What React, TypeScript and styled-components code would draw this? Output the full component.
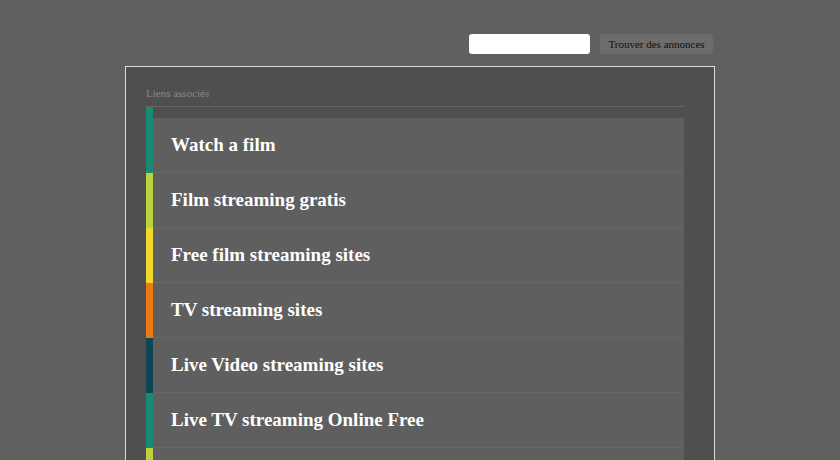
import React from 'react'
import styled, {createGlobalStyle} from 'styled-components'

const Global = createGlobalStyle`
  html, body { margin: 0; background: #606060; }
  body { font-family: "Liberation Serif", serif; }
`

const links = [
  {label: 'Watch a film', color: '#1a8a72'},
  {label: 'Film streaming gratis', color: '#bcd23c'},
  {label: 'Free film streaming sites', color: '#f2da2c'},
  {label: 'TV streaming sites', color: '#ee7a12'},
  {label: 'Live Video streaming sites', color: '#0e4656'},
  {label: 'Live TV streaming Online Free', color: '#1a8a72'},
  {label: 'Online streaming', color: '#bcd23c'}
]

export default function App() {
  return (
    <Page>
      <Global />
      <SearchBar>
        <SearchInput />
        <SearchButton>Trouver des annonces</SearchButton>
      </SearchBar>
      <Box>
        <Label>Liens associés</Label>
        <List>
          {links.map((l, i) => (
            <Item key={l.label} $color={l.color} $first={i === 0}>
              <Row>{l.label}</Row>
            </Item>
          ))}
        </List>
      </Box>
    </Page>
  )
}

const Page = styled.div`
  width: 840px;
  height: 460px;
  overflow: hidden;
  padding-top: 34px;
  box-sizing: border-box;
`

const SearchBar = styled.div`
  width: 590px;
  margin-left: 125px;
  display: flex;
  justify-content: flex-end;
  gap: 10px;
  padding-right: 2px;
  box-sizing: border-box;
`

const SearchInput = styled.div`
  width: 121px;
  height: 20px;
  background: #fff;
  border-radius: 3px;
`

const SearchButton = styled.div`
  width: 113px;
  height: 20px;
  background: #6c6c6c;
  border-radius: 3px;
  color: #111;
  font-size: 11px;
  line-height: 20px;
  text-align: center;
`

const Box = styled.div`
  margin: 12px 0 0 125px;
  width: 590px;
  height: 420px;
  box-sizing: border-box;
  border: 1px solid #dcdcdc;
  background: #4f4f4f;
  padding: 20px 30px 0 20px;
`

const Label = styled.div`
  color: #888;
  font-size: 11px;
  padding-bottom: 7px;
  border-bottom: 1px solid #646464;
`

const List = styled.div`
  display: flex;
  flex-direction: column;
`

const Item = styled.div<{$color: string; $first: boolean}>`
  border-left: 7px solid ${(p) => p.$color};
  padding-top: ${(p) => (p.$first ? '11px' : '0')};
`

const Row = styled.div`
  height: 54px;
  border-bottom: 1px solid #676767;
  background: #5f5f5f;
  color: #fff;
  font-size: 19px;
  font-weight: bold;
  line-height: 54px;
  padding-left: 18px;
`
